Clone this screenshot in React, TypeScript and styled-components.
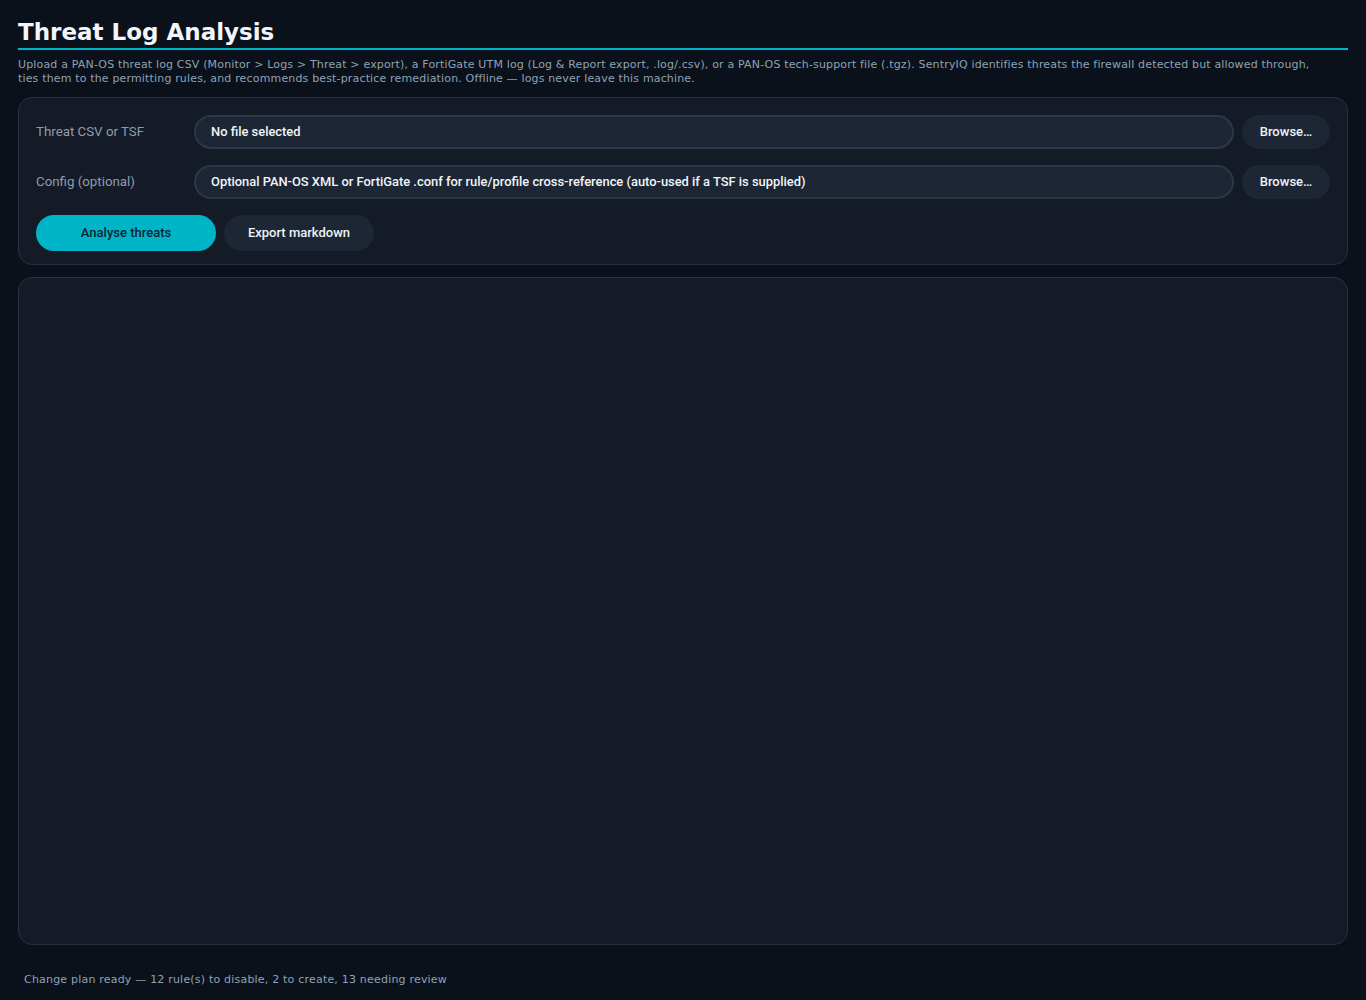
import React from 'react';
import styled, { createGlobalStyle } from 'styled-components';

const GlobalStyle = createGlobalStyle`
  html, body {
    margin: 0;
    padding: 0;
    background: #0b111a;
  }
  body {
    font-family: 'DejaVu Sans', sans-serif;
    color: #e6edf5;
  }
`;

const Page = styled.div`
  padding: 18px 18px 0;
  min-height: 1000px;
  box-sizing: border-box;
`;

const Title = styled.h1`
  margin: 0;
  font-family: 'DejaVu Sans', sans-serif;
  font-weight: 700;
  font-size: 23px;
  line-height: 28px;
  color: #f2f6fa;
  padding-bottom: 2px;
  border-bottom: 2px solid #00b4c8;
`;

const Intro = styled.p`
  margin: 8px 0 11px;
  max-width: 1312px;
  font-size: 11px;
  line-height: 14px;
  color: #8fa1b6;
  letter-spacing: 0.16px;
`;

const Panel = styled.section<{ $height?: number }>`
  background: #151b26;
  border: 1px solid #263142;
  border-radius: 14px;
  box-sizing: border-box;
  ${p => (p.$height ? `height: ${p.$height}px;` : '')}
`;

const FormPanel = styled(Panel)`
  padding: 17px 17px 13px;
  display: flex;
  flex-direction: column;
  gap: 16px;
  margin-bottom: 12px;
`;

const FieldRow = styled.div`
  display: grid;
  grid-template-columns: 150px 1fr auto;
  align-items: center;
  gap: 8px;
`;

const Label = styled.label`
  font-family: Roboto, 'Liberation Sans', sans-serif;
  font-size: 13.3px;
  color: #8f9bb0;
  padding-bottom: 1px;
`;

const FileBox = styled.div`
  height: 34px;
  box-sizing: border-box;
  border: 2px solid #2b3748;
  background: #1d2634;
  border-radius: 17px;
  display: flex;
  align-items: center;
  padding: 0 15px 1px;
  font-family: Roboto, 'Liberation Sans', sans-serif;
  font-weight: 500;
  font-size: 12.9px;
  color: #f1f5f9;
  white-space: nowrap;
  overflow: hidden;
`;

const Button = styled.button<{ $primary?: boolean; $width: number; $height: number }>`
  width: ${p => p.$width}px;
  height: ${p => p.$height}px;
  border: none;
  border-radius: ${p => p.$height / 2}px;
  background: ${p => (p.$primary ? '#00b4c8' : '#1d2634')};
  color: ${p => (p.$primary ? '#0d2532' : '#eef3f8')};
  font-family: Roboto, 'Liberation Sans', sans-serif;
  font-weight: 500;
  font-size: 13px;
  cursor: pointer;
  padding: 0 0 2px;
`;

const Actions = styled.div`
  display: flex;
  gap: 8px;
`;

const Status = styled.div`
  padding: 28px 6px 0;
  font-size: 11px;
  line-height: 14px;
  color: #8fa1b6;
  letter-spacing: 0.2px;
`;

export default function App() {
  return (
    <>
      <GlobalStyle />
      <Page>
        <Title>Threat Log Analysis</Title>
        <Intro>
          Upload a PAN-OS threat log CSV (Monitor &gt; Logs &gt; Threat &gt; export), a FortiGate UTM log (Log &amp;
          Report export, .log/.csv), or a PAN-OS tech-support file (.tgz). SentryIQ identifies threats the firewall
          detected but allowed through, ties them to the permitting rules, and recommends best-practice remediation.
          Offline — logs never leave this machine.
        </Intro>
        <FormPanel>
          <FieldRow>
            <Label>Threat CSV or TSF</Label>
            <FileBox>No file selected</FileBox>
            <Button $width={88} $height={34}>Browse…</Button>
          </FieldRow>
          <FieldRow>
            <Label>Config (optional)</Label>
            <FileBox>
              Optional PAN-OS XML or FortiGate .conf for rule/profile cross-reference (auto-used if a TSF is supplied)
            </FileBox>
            <Button $width={88} $height={34}>Browse…</Button>
          </FieldRow>
          <Actions>
            <Button $primary $width={180} $height={36}>Analyse threats</Button>
            <Button $width={150} $height={36}>Export markdown</Button>
          </Actions>
        </FormPanel>
        <Panel $height={668} />
        <Status>Change plan ready — 12 rule(s) to disable, 2 to create, 13 needing review</Status>
      </Page>
    </>
  );
}
